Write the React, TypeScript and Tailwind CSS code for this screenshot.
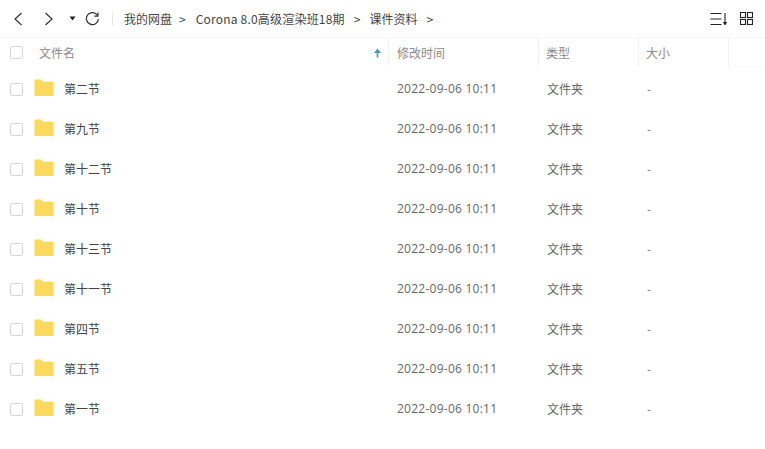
const font = { fontFamily: '"Noto Sans CJK SC", "Liberation Sans", sans-serif' };

const names = ["第二节", "第九节", "第十二节", "第十节", "第十三节", "第十一节", "第四节", "第五节", "第一节"];

function Folder() {
  return (
    <svg width="20" height="17" viewBox="0 0 21 17" preserveAspectRatio="none" className="block shrink-0">
      <path d="M1 0.5h6.5l2.2 2.5H19.5a1 1 0 0 1 1 1V16a1 1 0 0 1-1 1H1.5a1 1 0 0 1-1-1V1a.5.5 0 0 1 .5-.5z" fill="#fbd95c" />
    </svg>
  );
}

function Check() {
  return <span className="block h-[13px] w-[13px] shrink-0 rounded-[2px] border border-[#d8d8d8] bg-white" />;
}

export default function App() {
  return (
    <div className="flex h-[449px] w-[765px] flex-col overflow-hidden bg-white text-[12px] text-[#555]" style={font}>
      <div className="flex h-[37px] shrink-0 items-center text-[12px] text-[#444]">
        <svg width="12" height="14" viewBox="0 0 12 14" className="ml-[12px]" fill="none" stroke="#333" strokeWidth="1.2">
          <path d="M9.5 1 3 7l6.5 6" />
        </svg>
        <svg width="12" height="14" viewBox="0 0 12 14" className="ml-[19px]" fill="none" stroke="#333" strokeWidth="1.2">
          <path d="M2.5 1 9 7l-6.5 6" />
        </svg>
        <svg width="7" height="5" viewBox="0 0 7 5" className="ml-[14px]">
          <path d="M0.5 0.5h6L3.5 4.5z" fill="#222" />
        </svg>
        <svg width="15" height="15" viewBox="0 0 15 15" className="ml-[9px]" fill="none" stroke="#333" strokeWidth="1.2">
          <path d="M12.6 4.6A6 6 0 1 0 13.4 8" />
          <path d="M13 1.5v3.6H9.4" />
        </svg>
        <span className="ml-[12px] h-[14px] w-px bg-[#e8e8e8]" />
        <span className="ml-[11px] whitespace-pre">我的网盘</span>
        <span className="ml-[7px] whitespace-pre">&gt;</span>
        <span className="ml-[10px] whitespace-pre tracking-[0.2px]">Corona 8.0高级渲染班18期</span>
        <span className="ml-[9px] whitespace-pre">&gt;</span>
        <span className="ml-[9px] whitespace-pre">课件资料</span>
        <span className="ml-[9px] whitespace-pre">&gt;</span>
        <div className="ml-auto mr-[12px] flex items-center gap-[12px]">
          <svg width="18" height="14" viewBox="0 0 18 14" fill="none" stroke="#222" strokeWidth="1.1">
            <path d="M0.5 1.5h11M0.5 7h11M0.5 12.5h11M15 1v11.5" />
            <path d="M12.8 10h4.4L15 13.5z" fill="#222" stroke="none" />
          </svg>
          <svg width="13" height="13" viewBox="0 0 13 13" fill="none" stroke="#222" strokeWidth="1.1">
            <rect x="0.5" y="0.5" width="5" height="5" />
            <rect x="7.5" y="0.5" width="5" height="5" />
            <rect x="0.5" y="7.5" width="5" height="5" />
            <rect x="7.5" y="7.5" width="5" height="5" />
          </svg>
        </div>
      </div>
      <div className="flex h-[32px] shrink-0 items-center border-t border-[#f7f7f7] pb-[2px] text-[#8a8a8a]">
        <div className="flex w-[389px] items-center self-stretch border-r border-[#f2f2f2] pl-[10px]">
          <Check />
          <span className="ml-[16px]">文件名</span>
          <svg width="9" height="10" viewBox="0 0 9 10" className="ml-auto mr-[6px]">
            <path d="M4.5 0.5 8 5H5.3v4.5H3.7V5H1z" fill="#3f9fb8" />
          </svg>
        </div>
        <div className="flex w-[150px] items-center self-stretch border-r border-[#f2f2f2] pl-[8px]">修改时间</div>
        <div className="flex w-[100px] items-center self-stretch border-r border-[#f2f2f2] pl-[7px]">类型</div>
        <div className="flex w-[90px] items-center self-stretch border-r border-[#f2f2f2] pl-[7px]">大小</div>
        <div className="h-full flex-1 border-b border-[#fafafa]" />
      </div>
      <div className="flex flex-col">
        {names.map((n) => (
          <div key={n} className="flex h-[40px] items-center">
            <div className="flex w-[389px] items-center pl-[10px]">
              <Check />
              <span className="ml-[11px] -translate-y-[2px]"><Folder /></span>
              <span className="ml-[10px] text-[#444]">{n}</span>
            </div>
            <div className="w-[150px] pl-[8px] tracking-[0.25px] text-[#666]" style={{ fontFamily: '"Open Sans", sans-serif' }}>2022-09-06 10:11</div>
            <div className="w-[100px] pl-[8px] text-[#666]">文件夹</div>
            <div className="pl-[8px] text-[#777]">-</div>
          </div>
        ))}
      </div>
    </div>
  );
}
